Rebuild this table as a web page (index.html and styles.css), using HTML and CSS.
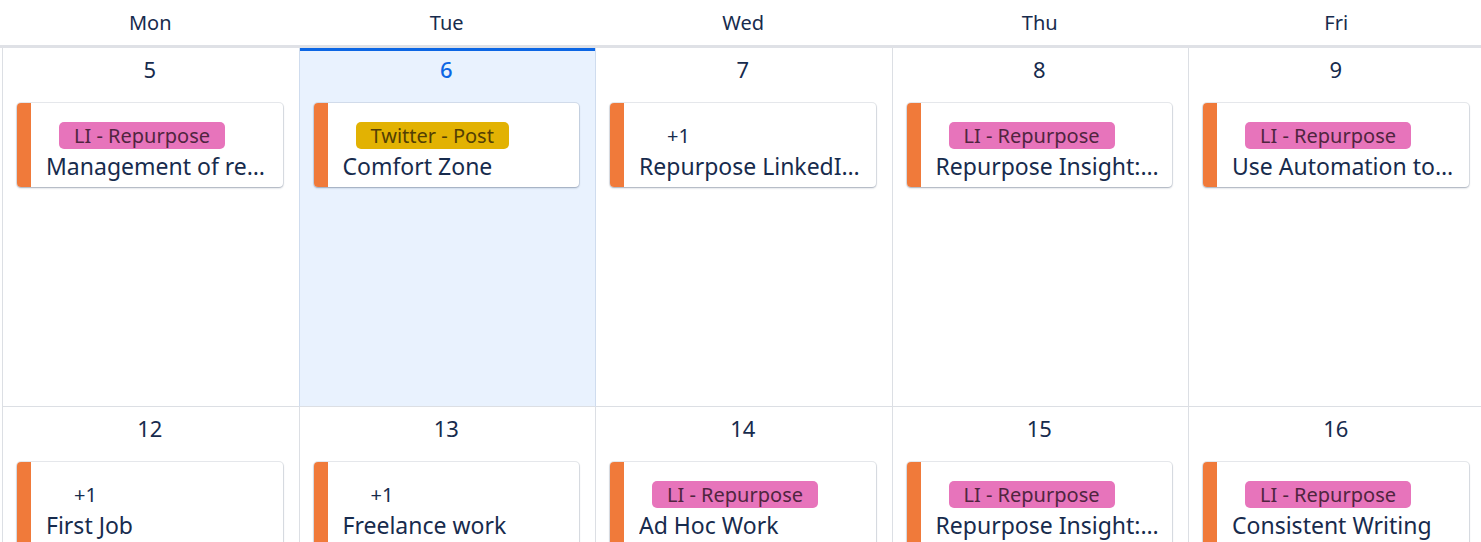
FILE: index.html
```html
<!DOCTYPE html>
<html lang="en">
<head>
<meta charset="utf-8">
<title>Calendar</title>
<link rel="stylesheet" href="styles.css">
</head>
<body>
<div class="calendar">
  <div class="head">
    <div class="grid">
      <div class="dow">Mon</div>
      <div class="dow">Tue</div>
      <div class="dow">Wed</div>
      <div class="dow">Thu</div>
      <div class="dow">Fri</div>
    </div>
  </div>
  <div class="grid body-grid">
    <div class="cell">
      <div class="date">5</div>
      <div class="card"><div class="bar"></div><div class="content"><div class="tags"><span class="tag pink">LI - Repurpose</span></div><div class="title">Management of resources and time</div></div></div>
    </div>
    <div class="cell today">
      <div class="date">6</div>
      <div class="card"><div class="bar"></div><div class="content"><div class="tags"><span class="tag yellow">Twitter - Post</span></div><div class="title">Comfort Zone</div></div></div>
    </div>
    <div class="cell">
      <div class="date">7</div>
      <div class="card"><div class="bar"></div><div class="content"><div class="tags"><span class="tag more">+1</span></div><div class="title">Repurpose LinkedIn Post</div></div></div>
    </div>
    <div class="cell">
      <div class="date">8</div>
      <div class="card"><div class="bar"></div><div class="content"><div class="tags"><span class="tag pink">LI - Repurpose</span></div><div class="title">Repurpose Insight: what matters</div></div></div>
    </div>
    <div class="cell">
      <div class="date">9</div>
      <div class="card"><div class="bar"></div><div class="content"><div class="tags"><span class="tag pink">LI - Repurpose</span></div><div class="title">Use Automation to save time</div></div></div>
    </div>

    <div class="cell">
      <div class="date">12</div>
      <div class="card"><div class="bar"></div><div class="content"><div class="tags"><span class="tag more">+1</span></div><div class="title">First Job</div></div></div>
    </div>
    <div class="cell">
      <div class="date">13</div>
      <div class="card"><div class="bar"></div><div class="content"><div class="tags"><span class="tag more">+1</span></div><div class="title">Freelance work</div></div></div>
    </div>
    <div class="cell">
      <div class="date">14</div>
      <div class="card"><div class="bar"></div><div class="content"><div class="tags"><span class="tag pink">LI - Repurpose</span></div><div class="title">Ad Hoc Work</div></div></div>
    </div>
    <div class="cell">
      <div class="date">15</div>
      <div class="card"><div class="bar"></div><div class="content"><div class="tags"><span class="tag pink">LI - Repurpose</span></div><div class="title">Repurpose Insight: consistency</div></div></div>
    </div>
    <div class="cell">
      <div class="date">16</div>
      <div class="card"><div class="bar"></div><div class="content"><div class="tags"><span class="tag pink">LI - Repurpose</span></div><div class="title">Consistent Writing</div></div></div>
    </div>
  </div>
</div>
</body>
</html>
```
FILE: styles.css
```css
html, body {
  margin: 0;
  padding: 0;
  background: #ffffff;
  overflow: hidden;
}
body {
  font-family: "Noto Sans", "Open Sans", sans-serif;
  color: #172b4d;
}
.calendar {
  width: 1481px;
  height: 542px;
  overflow: hidden;
}
.head {
  border-bottom: 3px solid #dfe1e6;
  height: 45px;
}
.grid {
  display: grid;
  grid-template-columns: repeat(5, 296.5px);
  margin-left: 2px;
  width: 1482.5px;
}
.dow {
  height: 45px;
  display: flex;
  align-items: center;
  justify-content: center;
  font-size: 20px;
  color: #172b4d;
}
.body-grid {
  grid-auto-rows: 359px;
}
.cell {
  border-left: 1px solid #dcdfe4;
  border-bottom: 1px solid #dcdfe4;
  padding: 0 16px 0 14px;
  box-sizing: border-box;
  display: flex;
  flex-direction: column;
}
.cell.today {
  background: #e9f2fe;
  box-shadow: inset 0 3px 0 #0c66e4;
  border-left-color: #cfdcee;
}
.cell.today + .cell {
  border-left-color: #cfdcee;
}
.date {
  height: 42px;
  display: flex;
  align-items: center;
  justify-content: center;
  font-size: 22px;
  color: #172b4d;
  margin-bottom: 13px;
}
.today .date {
  color: #0c66e4;
  font-weight: 500;
}
.card {
  display: flex;
  height: 84px;
  background: #ffffff;
  border-radius: 4px;
  box-shadow: 0 0 0 1px rgba(9, 30, 66, 0.09), 0 1px 2px rgba(9, 30, 66, 0.3);
  overflow: hidden;
}
.bar {
  width: 14px;
  flex: none;
  background: #f07a3a;
}
.content {
  flex: 1;
  min-width: 0;
  padding: 16px 12px 0 15px;
}
.tags {
  height: 32px;
  display: flex;
  align-items: center;
  padding-left: 13px;
}
.tag {
  height: 27px;
  line-height: 27px;
  padding: 0 15px;
  border-radius: 5px;
  font-size: 20px;
  white-space: nowrap;
}
.tag.pink {
  background: #e774bb;
  color: #50253f;
}
.tag.yellow {
  background: #e2b203;
  color: #533f04;
}
.tag.more {
  background: transparent;
  color: #172b4d;
}
.title {
  font-size: 23px;
  line-height: 30px;
  white-space: nowrap;
  overflow: hidden;
  text-overflow: ellipsis;
  color: #172b4d;
}
```
